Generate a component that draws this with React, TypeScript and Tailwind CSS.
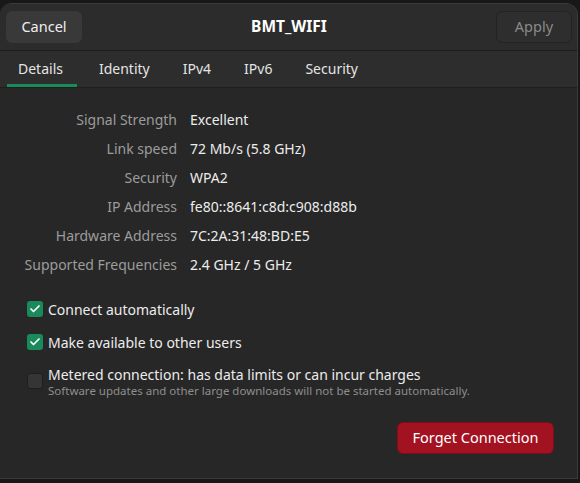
import { Check } from "lucide-react"

const rows = [
  ["Signal Strength", "Excellent"],
  ["Link speed", "72 Mb/s (5.8 GHz)"],
  ["Security", "WPA2"],
  ["IP Address", "fe80::8641:c8d:c908:d88b"],
  ["Hardware Address", "7C:2A:31:48:BD:E5"],
  ["Supported Frequencies", "2.4 GHz / 5 GHz"],
]

const tabs = ["Details", "Identity", "IPv4", "IPv6", "Security"]

function Box({ checked }: { checked: boolean }) {
  if (checked) {
    return (
      <span className="w-4 h-4 rounded-[3px] bg-[#1b8a5a] flex items-center justify-center shrink-0">
        <Check className="w-3 h-3 text-white" strokeWidth={3.5} />
      </span>
    )
  }
  return <span className="w-4 h-4 rounded-[3px] bg-[#353535] border border-[#1e1e1e] shrink-0" />
}

export default function App() {
  return (
    <div
      className="w-[580px] h-[483px] bg-[#181818] pt-[3px] overflow-hidden"
      style={{ fontFamily: '"Noto Sans", "Open Sans", sans-serif' }}
    >
      <div className="w-[578px] h-[476px] rounded-t-[12px] border border-[#3a3a3a] border-l-0 bg-[#272727] flex flex-col overflow-hidden">
        {/* Header bar */}
        <div className="h-[47px] bg-[#2c2c2c] border-b border-[#1c1c1c] flex items-center justify-between pl-[6px] pr-[5px]">
          <button className="w-[76px] h-[32px] rounded-[6px] bg-[#393939] text-[#eeeeee] text-[14.5px]">
            Cancel
          </button>
          <span className="text-[15.5px] font-bold text-white">BMT_WIFI</span>
          <button className="w-[76px] h-[32px] rounded-[6px] bg-[#2e2e2e] border border-[#232323] text-[#8a8a8a] text-[14.5px]">
            Apply
          </button>
        </div>

        {/* Tabs */}
        <div className="h-[37px] bg-[#2d2d2d] border-b border-[#1e1e1e] flex pl-[7px] gap-[11px]">
          {tabs.map((t, i) => (
            <div
              key={t}
              className={`px-[11px] flex items-center text-[14px] text-[#e4e4e4] border-b-[3px] ${
                i === 0 ? "border-[#1b8a5a] pr-[14px]" : "border-transparent"
              } pt-[2px]`}
            >
              {t}
            </div>
          ))}
        </div>

        {/* Body */}
        <div className="flex-1 flex flex-col">
          <div className="grid grid-cols-[177px_1fr] gap-x-[13px] pt-[17px]">
            {rows.map(([k, v]) => (
              <div key={k} className="contents">
                <span className="h-[29px] leading-[29px] text-right text-[14px] text-[#9c9c9c]">{k}</span>
                <span className="h-[29px] leading-[29px] text-[14px] text-[#ececec]">{v}</span>
              </div>
            ))}
          </div>

          <div className="flex flex-col pl-[27px] mt-[18px] gap-[9px]">
            <label className="h-[24px] flex items-center gap-[5px] text-[14px] text-[#ececec]">
              <Box checked />
              Connect automatically
            </label>
            <label className="h-[24px] flex items-center gap-[5px] text-[14px] text-[#ececec]">
              <Box checked />
              Make available to other users
            </label>
            <label className="flex items-center gap-[5px] mt-[2px]">
              <Box checked={false} />
              <span className="flex flex-col">
                <span className="text-[14px] leading-[19px] text-[#ececec]">
                  Metered connection: has data limits or can incur charges
                </span>
                <span className="text-[11.5px] leading-[13px] text-[#8e8e8e]">
                  Software updates and other large downloads will not be started automatically.
                </span>
              </span>
            </label>
          </div>

          <div className="flex justify-end pr-[23px] mt-[25px]">
            <button className="w-[157px] h-[32px] rounded-[6px] bg-[#a31221] border border-[#7e0e1a] text-white text-[14.5px]">
              Forget Connection
            </button>
          </div>
        </div>
      </div>
    </div>
  )
}
